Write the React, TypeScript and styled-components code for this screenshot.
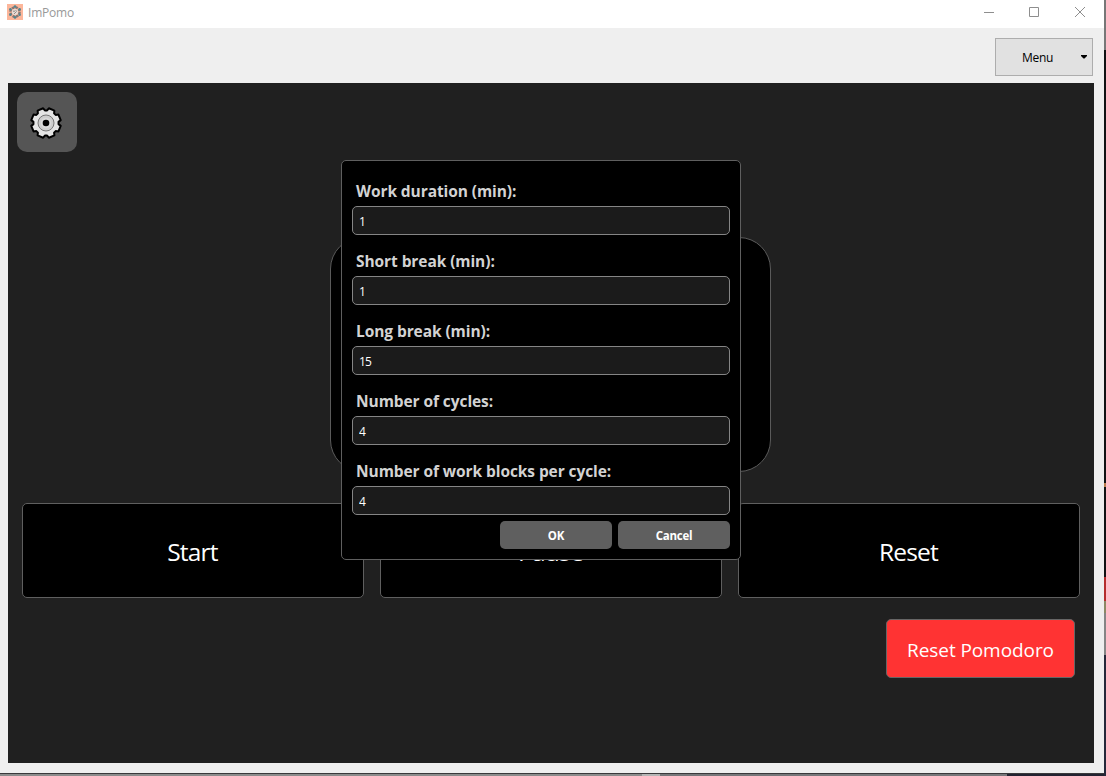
import React from 'react';
import styled, { createGlobalStyle } from 'styled-components';

const GlobalStyle = createGlobalStyle`
  *, *::before, *::after { box-sizing: border-box; }
  body { margin: 0; overflow: hidden; font-family: 'Open Sans', 'Noto Sans', sans-serif; }
  button, input { font-family: inherit; margin: 0; }
`;

const Desktop = styled.div`
  width: 1106px;
  height: 776px;
  overflow: hidden;
  padding: 0 2px 3px 0;
  background:
    linear-gradient(90deg, #8c8c8c 0 642px, #b5b5b5 642px 660px, #77777a 660px 1007px, #232331 1007px) 0 774px / 1104px 2px no-repeat,
    linear-gradient(#777 0 50px, #101214 50px 483px, #b97d4d 483px 487px, #101214 487px 577px, #b52d2d 577px 601px, #8c8965 601px 613px, #858585 613px 655px, #25283a 655px) 1104px 0 / 2px 776px no-repeat,
    #39393b;
`;

const Window = styled.div`
  width: 1104px;
  height: 773px;
  display: flex;
  flex-direction: column;
  background: #efefef;
`;

const TitleBar = styled.header`
  height: 28px;
  display: flex;
  align-items: center;
  padding: 0 18px 4px 7px;
  background: #fff;
`;

const AppTitle = styled.span`
  flex: 1;
  margin-left: 5px;
  font-size: 12px;
  line-height: 16px;
  letter-spacing: -0.2px;
  color: #999;
  padding-top: 2px;
`;

const WindowControls = styled.div`
  display: flex;
  gap: 34px;

  svg { display: block; }
`;

const Toolbar = styled.div`
  height: 55px;
  display: flex;
  justify-content: flex-end;
  padding: 10px 11px 0 0;
`;

const MenuButton = styled.button`
  width: 98px;
  height: 38px;
  display: flex;
  align-items: center;
  padding: 0 5px 0 26px;
  border: 1px solid #adadad;
  border-radius: 0;
  background: #e1e1e1;
  color: #000;
  font-size: 12px;
  letter-spacing: -0.3px;

  span { flex: 1; text-align: left; }
`;

const Content = styled.main`
  width: 1086px;
  height: 680px;
  margin-left: 8px;
  position: relative;
  display: flex;
  flex-direction: column;
  background: #202020;
  padding: 9px 14px 0;
`;

const SettingsButton = styled.button`
  width: 60px;
  height: 60px;
  margin-left: -5px;
  display: grid;
  place-items: center;
  padding: 2px 3px 0 0;
  border: 0;
  border-radius: 10px;
  background: #555;
`;

const TimerPanel = styled.section`
  width: 441px;
  height: 235px;
  margin: 85px 0 31px 308px;
  border: 1px solid #5a5a5a;
  border-radius: 32px;
  background: #000;
`;

const Controls = styled.div`
  display: flex;
  gap: 16px;
`;

const ControlButton = styled.button`
  width: 342px;
  height: 95px;
  padding: 1px 1px 0 0;
  border: 1px solid #5f5f5f;
  border-radius: 5px;
  background: #000;
  color: #fff;
  font-size: 24.5px;
  letter-spacing: -0.8px;
`;

const ResetPomodoroButton = styled.button`
  width: 189px;
  height: 59px;
  margin: 21px 5px 0 0;
  align-self: flex-end;
  padding: 2px 0 0;
  border: 1px solid #666;
  border-radius: 5px;
  background: #f33;
  color: #fff;
  font-size: 19px;
  letter-spacing: -0.08px;
`;

const Dialog = styled.form`
  position: absolute;
  left: 333px;
  top: 77px;
  width: 400px;
  height: 400px;
  padding: 15px 10px 0;
  border: 1px solid #5f5f5f;
  border-radius: 5px;
  background: #000;
`;

const Field = styled.label`
  display: block;
  height: 70px;
`;

const FieldLabel = styled.span`
  display: block;
  height: 30px;
  padding-left: 4px;
  line-height: 30px;
  font-size: 15.5px;
  font-weight: 700;
  letter-spacing: -0.08px;
  color: #d3d3d3;
  white-space: nowrap;
`;

const FieldInput = styled.input`
  display: block;
  width: 378px;
  height: 29px;
  padding: 2px 6px 0;
  border: 1px solid #858585;
  border-radius: 5px;
  outline: 0;
  background: #1b1b1b;
  color: #fff;
  font-size: 12px;
  letter-spacing: -0.9px;
`;

const DialogActions = styled.div`
  display: flex;
  justify-content: flex-end;
  gap: 6px;
  margin-top: -5px;
`;

const DialogButton = styled.button`
  width: 112px;
  height: 28px;
  padding: 1px 0 0;
  border: 0;
  border-radius: 5px;
  background: #5f5f5f;
  color: #fff;
  font-size: 11.5px;
  font-weight: 700;
  letter-spacing: -0.25px;
`;

const fields = [
  { label: 'Work duration (min):', value: '1' },
  { label: 'Short break (min):', value: '1' },
  { label: 'Long break (min):', value: '15' },
  { label: 'Number of cycles:', value: '4' },
  { label: 'Number of work blocks per cycle:', value: '4' },
];

const AppIcon = () => (
  <svg width="16" height="16" viewBox="0 0 16 16">
    <rect width="16" height="16" fill="#fcb69a" />
    <circle cx="8" cy="8" r="4.6" fill="none" stroke="#857876" strokeWidth="2.4" strokeDasharray="2.4 1.2" />
    <circle cx="8" cy="8" r="3" fill="#e5ddd8" />
    <path d="M6 7.2h2M8.5 6.5l1.5 1M7 10l2-2" stroke="#8a807c" strokeWidth="0.9" />
    <g fill="#4f8590">
      <circle cx="8" cy="2.6" r="1.3" />
      <circle cx="12.6" cy="5.2" r="1.3" />
      <circle cx="12.6" cy="10.8" r="1.3" />
      <circle cx="8" cy="13.4" r="1.3" />
      <circle cx="3.4" cy="10.8" r="1.3" />
      <circle cx="3.4" cy="5.2" r="1.3" />
    </g>
  </svg>
);

// Eight wide teeth separated by narrow notches, starting at the top notch.
const gearPath = Array.from({ length: 8 }, (_, i) => {
  const point = (r: number, deg: number) => {
    const a = ((i * 45 + deg - 90) * Math.PI) / 180;
    return `${(17 + r * Math.cos(a)).toFixed(2)} ${(17 + r * Math.sin(a)).toFixed(2)}`;
  };
  return `${i ? 'L' : 'M'}${point(12.6, -5)}L${point(12.6, 5)}L${point(15, 11)}L${point(15, 34)}`;
}).join('') + 'Z';

const GearIcon = () => (
  <svg width="34" height="34" viewBox="0 0 34 34">
    <path d={gearPath} fill="#e5e5e5" stroke="#000" strokeWidth="2" strokeLinejoin="round" />
    <circle cx="17" cy="17" r="8" fill="#cecece" stroke="#777" strokeWidth="1" />
    <circle cx="17" cy="17" r="5.2" fill="#dadada" />
    <circle cx="17" cy="17" r="3.3" fill="#000" />
  </svg>
);

export default function App() {
  return (
    <>
      <GlobalStyle />
      <Desktop>
        <Window>
          <TitleBar>
            <AppIcon />
            <AppTitle>ImPomo</AppTitle>
            <WindowControls>
              <svg width="12" height="12" viewBox="0 0 12 12"><path d="M2 6.5h10" stroke="#8e8e8e" /></svg>
              <svg width="12" height="12" viewBox="0 0 12 12"><path d="M1.5 1.5h9v9h-9z" fill="none" stroke="#8e8e8e" /></svg>
              <svg width="12" height="12" viewBox="0 0 12 12"><path d="M1 1l10 10M11 1L1 11" stroke="#8e8e8e" /></svg>
            </WindowControls>
          </TitleBar>
          <Toolbar>
            <MenuButton type="button">
              <span>Menu</span>
              <svg width="7" height="4" viewBox="0 0 7 4"><path d="M1 0h6v1L4.5 3.5h-1L1 1z" /></svg>
            </MenuButton>
          </Toolbar>
          <Content>
            <SettingsButton type="button" aria-label="Settings"><GearIcon /></SettingsButton>
            <TimerPanel />
            <Controls>
              <ControlButton type="button">Start</ControlButton>
              <ControlButton type="button">Pause</ControlButton>
              <ControlButton type="button">Reset</ControlButton>
            </Controls>
            <ResetPomodoroButton type="button">Reset Pomodoro</ResetPomodoroButton>
            <Dialog>
              {fields.map((field) => (
                <Field key={field.label}>
                  <FieldLabel>{field.label}</FieldLabel>
                  <FieldInput defaultValue={field.value} />
                </Field>
              ))}
              <DialogActions>
                <DialogButton type="button">OK</DialogButton>
                <DialogButton type="button">Cancel</DialogButton>
              </DialogActions>
            </Dialog>
          </Content>
        </Window>
      </Desktop>
    </>
  );
}
